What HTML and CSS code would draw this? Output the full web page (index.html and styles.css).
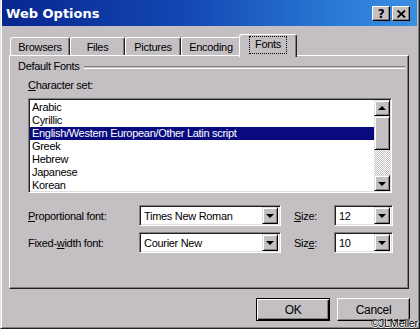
FILE: index.html
```html
<!DOCTYPE html>
<html>
<head>
<meta charset="utf-8">
<link rel="stylesheet" href="styles.css">
</head>
<body>
<div class="window">
  <div class="titlebar">
    <span class="title">Web Options</span>
    <div class="tbtns">
      <span class="tbtn help">?</span>
      <span class="tbtn close"><svg width="9" height="8" viewBox="0 0 9 8"><path d="M0.5 0.5 L8 7.5 M8 0.5 L0.5 7.5" stroke="#000" stroke-width="1.8"/></svg></span>
    </div>
  </div>
  <div class="tabs">
    <div class="tab w60">Browsers</div>
    <div class="tab w55">Files</div>
    <div class="tab w56">Pictures</div>
    <div class="tab w60">Encoding</div>
    <div class="tab active"><span class="focus">Fonts</span></div>
  </div>
  <div class="panel">
    <div class="group"><span>Default Fonts</span><i class="etch"></i></div>
    <div class="content">
      <div class="lbl"><u>C</u>haracter set:</div>
      <div class="listbox">
        <div class="items">
          <div class="item">Arabic</div>
          <div class="item">Cyrillic</div>
          <div class="item sel">English/Western European/Other Latin script</div>
          <div class="item">Greek</div>
          <div class="item">Hebrew</div>
          <div class="item">Japanese</div>
          <div class="item">Korean</div>
        </div>
        <div class="scroll">
          <div class="sbtn"><i class="tri up"></i></div>
          <div class="thumb"></div>
          <div class="track"></div>
          <div class="sbtn"><i class="tri"></i></div>
        </div>
      </div>
      <div class="row first">
        <span class="rlbl"><u>P</u>roportional font:</span>
        <div class="combo"><span class="val">Times New Roman</span><div class="dd"><i class="tri"></i></div></div>
        <span class="slbl"><u>S</u>ize:</span>
        <div class="combo"><span class="val">12</span><div class="dd"><i class="tri"></i></div></div>
      </div>
      <div class="row">
        <span class="rlbl">Fixed-<u>w</u>idth font:</span>
        <div class="combo"><span class="val">Courier New</span><div class="dd"><i class="tri"></i></div></div>
        <span class="slbl">Siz<u>e</u>:</span>
        <div class="combo"><span class="val">10</span><div class="dd"><i class="tri"></i></div></div>
      </div>
    </div>
  </div>
  <div class="buttons">
    <div class="btn default"><span>OK</span></div>
    <div class="btn"><span>Cancel</span></div>
  </div>
  <div class="copy">©JLMeller</div>
</div>
</body>
</html>
```
FILE: styles.css
```css
html, body {
  margin: 0;
  padding: 0;
  background: #c3bfc3;
}
body {
  font-family: "Liberation Sans", Arial, sans-serif;
  font-size: 11px;
  letter-spacing: -0.3px;
  color: #000;
}
.window {
  position: relative;
  width: 420px;
  height: 329px;
  box-sizing: border-box;
  background: #c3bfc3;
  padding: 0 2px 2px 2px;
  border-left: 1px solid #e4e0e4;
  border-bottom: 1px solid #202020;
  border-right: 1px solid #202020;
  box-shadow: inset 1px 0 #fff, inset -1px -1px #808080;
  display: flex;
  flex-direction: column;
}
.titlebar {
  height: 26px;
  flex: none;
  background: linear-gradient(90deg, #08268e 0%, #1448b4 45%, #2a7ad4 80%, #3a8ee0 100%);
  display: flex;
  align-items: center;
  justify-content: space-between;
  padding: 0 7px 0 4px;
  margin-left: -1px;
}
.title {
  color: #fff;
  font-family: "DejaVu Sans", Verdana, sans-serif;
  font-weight: bold;
  font-size: 13px;
  letter-spacing: 0;
}
.tbtns {
  display: flex;
  gap: 2px;
  margin-top: 1px;
}
.tbtn {
  width: 18px;
  height: 15px;
  box-sizing: border-box;
  background: #c3bfc3;
  border-top: 1px solid #fff;
  border-left: 1px solid #fff;
  border-right: 1px solid #000;
  border-bottom: 1px solid #000;
  box-shadow: inset -1px -1px #808080;
  display: flex;
  align-items: center;
  justify-content: center;
}
.help {
  font-family: "DejaVu Sans", sans-serif;
  font-weight: bold;
  font-size: 12px;
  line-height: 12px;
}
.tabs {
  display: flex;
  align-items: flex-end;
  height: 21px;
  margin-top: 8px;
  padding-left: 7px;
  flex: none;
}
.tab {
  height: 18px;
  box-sizing: border-box;
  border-top: 1px solid #fff;
  border-left: 1px solid #fff;
  border-right: 1px solid #202020;
  border-radius: 3px 3px 0 0;
  box-shadow: inset -1px 0 #808080;
  text-align: center;
  padding-top: 3px;
  line-height: 13px;
}
.w60 { width: 60px; }
.w55 { width: 55px; }
.w56 { width: 56px; }
.tab.active {
  position: relative;
  z-index: 1;
  width: 58px;
  height: 23px;
  margin-left: -2px;
  margin-bottom: -2px;
  background: #c3bfc3;
  padding-top: 2px;
}
.focus {
  display: inline-block;
  outline: 1px dotted #000;
  padding: 1px 5px 2px 5px;
}
.panel {
  margin: 0 8px 0 6px;
  height: 234px;
  flex: none;
  box-sizing: border-box;
  border-top: 1px solid #fff;
  border-left: 1px solid #fff;
  border-right: 1px solid #202020;
  border-bottom: 1px solid #202020;
  box-shadow: inset -1px -1px #808080;
  padding: 4px 16px 0 8px;
}
.group {
  display: flex;
  align-items: center;
  height: 13px;
  line-height: 13px;
  margin-right: -13px;
}
.etch {
  flex: 1;
  height: 1px;
  border-top: 1px solid #808080;
  border-bottom: 1px solid #fff;
  margin-left: 4px;
  margin-top: 1px;
}
.content {
  padding-left: 10px;
}
.lbl {
  margin-top: 6px;
  line-height: 13px;
}
.listbox {
  margin-top: 6px;
  height: 95px;
  box-sizing: border-box;
  background: #fff;
  border-top: 1px solid #808080;
  border-left: 1px solid #808080;
  border-right: 1px solid #fff;
  border-bottom: 1px solid #fff;
  box-shadow: inset 1px 1px #202020, inset -1px -1px #dfdfdf;
  padding: 1px;
  display: flex;
  overflow: hidden;
}
.items {
  flex: 1;
  padding-top: 1px;
  overflow: hidden;
}
.item {
  height: 13px;
  line-height: 13px;
  padding-left: 2px;
  white-space: nowrap;
}
.item.sel {
  background: #0a0a80;
  color: #fff;
}
.scroll {
  width: 16px;
  display: flex;
  flex-direction: column;
}
.sbtn {
  height: 16px;
  flex: none;
  box-sizing: border-box;
  background: #c3bfc3;
  border-top: 1px solid #dfdfdf;
  border-left: 1px solid #dfdfdf;
  border-right: 1px solid #000;
  border-bottom: 1px solid #000;
  box-shadow: inset 1px 1px #fff, inset -1px -1px #808080;
  display: flex;
  align-items: center;
  justify-content: center;
}
.thumb {
  height: 34px;
  flex: none;
  box-sizing: border-box;
  background: #c3bfc3;
  border-top: 1px solid #dfdfdf;
  border-left: 1px solid #dfdfdf;
  border-right: 1px solid #000;
  border-bottom: 1px solid #000;
  box-shadow: inset 1px 1px #fff, inset -1px -1px #808080;
}
.track {
  flex: 1;
  background: repeating-conic-gradient(#c3bfc3 0 25%, #fff 0 50%) 0 0 / 2px 2px;
}
.tri {
  width: 0;
  height: 0;
  border-left: 4px solid transparent;
  border-right: 4px solid transparent;
  border-top: 4px solid #000;
  margin-top: 1px;
}
.tri.up {
  border-top: 0;
  border-bottom: 4px solid #000;
  margin-top: -1px;
}
.row {
  display: grid;
  grid-template-columns: 111px 142px 53px 59px;
  align-items: center;
  margin-top: 6px;
  height: 21px;
}
.row.first {
  margin-top: 12px;
}
.slbl {
  padding-left: 13px;
}
.combo {
  height: 21px;
  box-sizing: border-box;
  background: #fff;
  border-top: 1px solid #808080;
  border-left: 1px solid #808080;
  border-right: 1px solid #fff;
  border-bottom: 1px solid #fff;
  box-shadow: inset 1px 1px #202020, inset -1px -1px #dfdfdf;
  padding: 2px;
  display: flex;
  align-items: center;
}
.val {
  flex: 1;
  padding-left: 2px;
  white-space: nowrap;
  overflow: hidden;
}
.dd {
  width: 16px;
  height: 17px;
  box-sizing: border-box;
  background: #c3bfc3;
  border-top: 1px solid #dfdfdf;
  border-left: 1px solid #dfdfdf;
  border-right: 1px solid #000;
  border-bottom: 1px solid #000;
  box-shadow: inset 1px 1px #fff, inset -1px -1px #808080;
  display: flex;
  align-items: center;
  justify-content: center;
}
.buttons {
  display: flex;
  justify-content: flex-end;
  gap: 7px;
  margin-top: 9px;
  padding-right: 7px;
}
.btn {
  width: 73px;
  height: 23px;
  box-sizing: border-box;
  border-top: 1px solid #fff;
  border-left: 1px solid #fff;
  border-right: 1px solid #000;
  border-bottom: 1px solid #000;
  box-shadow: inset -1px -1px #808080;
  display: flex;
  align-items: center;
  justify-content: center;
  font-size: 12px;
}
.btn.default {
  width: 74px;
  border: 1px solid #000;
  box-shadow: inset 1px 1px #fff, inset -1px -1px #000, inset -2px -2px #808080;
}
.copy {
  position: absolute;
  right: 1px;
  bottom: -1px;
  font-size: 11px;
  line-height: 11px;
  letter-spacing: -0.3px;
  white-space: nowrap;
  color: #000;
  text-shadow: 1px 0 #fff, 0 1px #fff;
}
```
